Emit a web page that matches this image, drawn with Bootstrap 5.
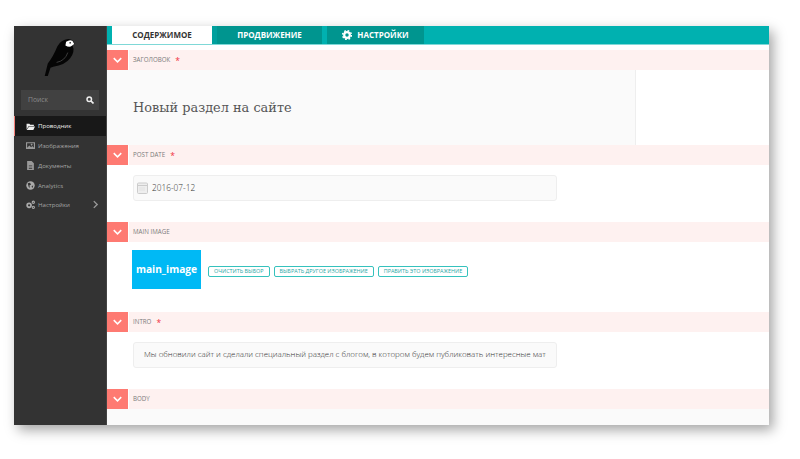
<!DOCTYPE html>
<html lang="ru">
<head>
<meta charset="utf-8">
<title>Новый раздел</title>
<link href="https://cdn.jsdelivr.net/npm/bootstrap@5.3.0/dist/css/bootstrap.min.css" rel="stylesheet">
<style>
html,body{height:459px;overflow:hidden;background:#fff;}
body{padding:26px 31px 0 14px;font-family:"Open Sans",sans-serif;color:#666;}
.shell{height:399px;box-shadow:4px 5px 12px rgba(0,0,0,.36);background:#fff;overflow:hidden;}
.side{width:93px;background:#333;color:#aaa;border-right:1px solid #444;}
.logo-wrap{height:64px;padding:12px 0 0 29px;}
.logo-wrap svg{display:block;}
.find{margin:0 7px 6px 7px;height:20px;background:#414141;padding:0 5px 0 7px;font-size:6.8px;color:#8a8a8a;}
.side-link{height:19.7px;padding-left:11px;font-size:6.1px;color:#a5a5a5;gap:3px;text-decoration:none;border-left:1px solid transparent;}
.side-link.on{height:20px;background:#181818;color:#eee;border-left-color:#f37e77;}
.side-link svg{width:9px;height:9px;flex:none;}
.caret{margin-left:auto;margin-right:6px;}
.work{min-width:0;}
.tabbar{height:18px;background:#00b1b0;padding-left:5px;margin-bottom:6px;box-shadow:0 1px 0 #7fd8d7;}
.tab-item{height:18px;width:100px;font-size:8px;font-weight:700;color:#fff;text-transform:uppercase;background:#00958f;}
.tab-item.on{background:#fff;color:#333;}
.tab-item.mid{width:110px;border-left:5px solid #00a09d;}
.tab-item.set{width:97px;margin-left:5px;gap:5px;}
.sec-head{height:20px;background:#fef1f0;}
.sec-head.tall{height:20.5px;}
.toggle{width:22px;height:100%;background:#fe7a72;border-right:1px solid #fff;margin-right:4px;flex:none;}
.sec-label{font-size:6.2px;color:#7b7b7b;text-transform:uppercase;}
.req{color:#f0303f;font-size:8.5px;margin-left:5px;line-height:1;padding-top:2px;}
.title-box{height:75px;width:529px;background:#fafafa;border-right:1px solid #eee;padding:1px 26px 0;font-family:"DejaVu Serif",serif;font-size:12.9px;color:#555;}
.pane{padding-left:26px;}
.date-pane{height:57px;padding-top:10px;}
.image-pane{height:70px;padding-top:8px;gap:7px;}
.intro-pane{height:56.5px;padding-top:10px;}
.field{width:424px;height:26px;background:#fafafa;border:1px solid #eee;border-radius:3px;box-shadow:none;font-family:"Open Sans",sans-serif;font-size:7.95px;font-weight:300;color:#333;}
.field.form-control{padding:0 10px 2px;min-height:0;}
.field.form-control:focus{background:#fafafa;border-color:#eee;box-shadow:none;color:#333;}
.date-text{gap:4px;padding:0 3px;font-size:8.3px;}
.thumb{width:69px;height:39px;margin-left:-1px;background:#00b9f5;color:#fff;font-weight:700;font-size:10.2px;flex:none;}
.act.btn{font-size:5.45px;line-height:1;height:11px;padding:0 5px;border:1px solid #35c2bd;color:#28a8a5;background:#fff;border-radius:2px;text-transform:uppercase;white-space:nowrap;}
.tail{height:16px;background:#fafafa;}
</style>
</head>
<body>
<div class="shell d-flex">
  <aside class="side d-flex flex-column flex-shrink-0">
    <div class="logo-wrap">
      <svg width="34" height="39" viewBox="70 25 100 115" aria-label="logo">
        <path fill="#050505" d="M112 50Q122 30 145 28Q155 28 160 36L163 43L157 47Q165 65 150 85Q135 105 100 110L92 113L84 137L75 137L84 100Q100 80 112 50Z"/>
        <path fill="#fff" d="M138 36Q150 28 157 34L162 43L156 47Q148 54 136 47Z"/>
        <circle cx="150" cy="39" r="2.500" fill="#222"/>
        <path fill="none" stroke="#555" stroke-width="2" d="M110 97Q135 92 143 68"/>
      </svg>
    </div>
    <div class="find d-flex align-items-center justify-content-between">
      <span>Поиск</span>
      <svg width="8" height="8" viewBox="0 0 16 16"><circle cx="6.500" cy="6.500" r="4.500" fill="none" stroke="#eee" stroke-width="3"/><path d="M10 10l5 5" stroke="#eee" stroke-width="3.400"/></svg>
    </div>
    <nav class="d-flex flex-column">
      <a class="side-link on d-flex align-items-center" href="#">
        <svg viewBox="0 0 16 16"><path fill="#eee" d="M1 3h5l1.500 2H14v2H5L1 13zM5.500 8H16l-3 6H1z"/></svg>Проводник</a>
      <a class="side-link d-flex align-items-center" href="#">
        <svg viewBox="0 0 16 16"><path fill="#999" fill-rule="evenodd" d="M0 2h16v12H0zM2 4v8l4-4 3 3 2-2 3 3V4zM10 5a1.500 1.500 0 1 0 .01 0z"/></svg>Изображения</a>
      <a class="side-link d-flex align-items-center" href="#">
        <svg viewBox="0 0 16 16"><path fill="#999" fill-rule="evenodd" d="M2 0h8l4 4v12H2zM5 7v1h6V7zM5 10v1h6v-1zM5 13v1h6v-1z"/></svg>Документы</a>
      <a class="side-link d-flex align-items-center" href="#">
        <svg viewBox="0 0 16 16"><circle cx="8" cy="8" r="7.500" fill="#aaa"/><path fill="#333" d="M3 4l4-1 2 3-3 2 1 4-2-1zM10 9l3-1-2 5z"/></svg>Analytics</a>
      <a class="side-link d-flex align-items-center" href="#">
        <svg viewBox="0 0 16 16"><circle cx="5.500" cy="9.500" r="3.500" fill="none" stroke="#aaa" stroke-width="3"/><circle cx="13" cy="4" r="2" fill="none" stroke="#aaa" stroke-width="2"/><circle cx="13" cy="13" r="2" fill="none" stroke="#aaa" stroke-width="2"/></svg>Настройки
        <svg class="caret" viewBox="0 0 16 16"><path d="M5 2l6 6-6 6" fill="none" stroke="#999" stroke-width="2.500"/></svg></a>
    </nav>
  </aside>
  <main class="work flex-grow-1">
    <div class="tabbar d-flex">
      <div class="tab-item on d-flex align-items-center justify-content-center">Содержимое</div>
      <div class="tab-item mid d-flex align-items-center justify-content-center">Продвижение</div>
      <div class="tab-item set d-flex align-items-center justify-content-center">
        <svg width="10" height="10" viewBox="0 0 16 16"><circle cx="8" cy="8" r="4.500" fill="none" stroke="#fff" stroke-width="3.500"/><circle cx="8" cy="8" r="7" fill="none" stroke="#fff" stroke-width="2.400" stroke-dasharray="2.750 2.750"/></svg>Настройки</div>
    </div>

    <div class="sec-head d-flex align-items-center">
      <div class="toggle d-flex align-items-center justify-content-center"><svg width="9" height="6" viewBox="0 0 12 8"><path d="M1 1.500l5 5 5-5" fill="none" stroke="#fff" stroke-width="2"/></svg></div>
      <span class="sec-label">Заголовок</span><span class="req">*</span>
    </div>
    <div class="title-box d-flex align-items-center">Новый раздел на сайте</div>

    <div class="sec-head d-flex align-items-center">
      <div class="toggle d-flex align-items-center justify-content-center"><svg width="9" height="6" viewBox="0 0 12 8"><path d="M1 1.500l5 5 5-5" fill="none" stroke="#fff" stroke-width="2"/></svg></div>
      <span class="sec-label">Post date</span><span class="req">*</span>
    </div>
    <div class="pane date-pane">
      <div class="field date-text d-flex align-items-center">
        <svg width="11" height="12" viewBox="0 0 11 12"><rect x=".5" y="1" width="10" height="10.500" rx="1" fill="#eee" stroke="#ccc"/><path d="M1 3.500h9" stroke="#ccc"/><path d="M2.500 6h6M2.500 8h6" stroke="#d5d5d5" stroke-dasharray="1 1"/></svg>
        <span>2016-07-12</span>
      </div>
    </div>

    <div class="sec-head d-flex align-items-center">
      <div class="toggle d-flex align-items-center justify-content-center"><svg width="9" height="6" viewBox="0 0 12 8"><path d="M1 1.500l5 5 5-5" fill="none" stroke="#fff" stroke-width="2"/></svg></div>
      <span class="sec-label">Main image</span>
    </div>
    <div class="pane image-pane d-flex align-items-start">
      <div class="thumb d-flex align-items-center justify-content-center">main_image</div>
      <div class="d-flex gap-1 align-items-center pt-3 mt-0">
        <button class="btn act" type="button">Очистить выбор</button>
        <button class="btn act" type="button">Выбрать другое изображение</button>
        <button class="btn act" type="button">Править это изображение</button>
      </div>
    </div>

    <div class="sec-head d-flex align-items-center">
      <div class="toggle d-flex align-items-center justify-content-center"><svg width="9" height="6" viewBox="0 0 12 8"><path d="M1 1.500l5 5 5-5" fill="none" stroke="#fff" stroke-width="2"/></svg></div>
      <span class="sec-label">Intro</span><span class="req">*</span>
    </div>
    <div class="pane intro-pane">
      <input class="form-control field" type="text" aria-label="Intro" value="Мы обновили сайт и сделали специальный раздел с блогом, в котором будем публиковать интересные материалы">
    </div>

    <div class="sec-head tall d-flex align-items-center">
      <div class="toggle d-flex align-items-center justify-content-center"><svg width="9" height="6" viewBox="0 0 12 8"><path d="M1 1.500l5 5 5-5" fill="none" stroke="#fff" stroke-width="2"/></svg></div>
      <span class="sec-label">Body</span>
    </div>
    <div class="tail"></div>
  </main>
</div>
<script src="https://cdn.jsdelivr.net/npm/bootstrap@5.3.0/dist/js/bootstrap.bundle.min.js"></script>
</body>
</html>
